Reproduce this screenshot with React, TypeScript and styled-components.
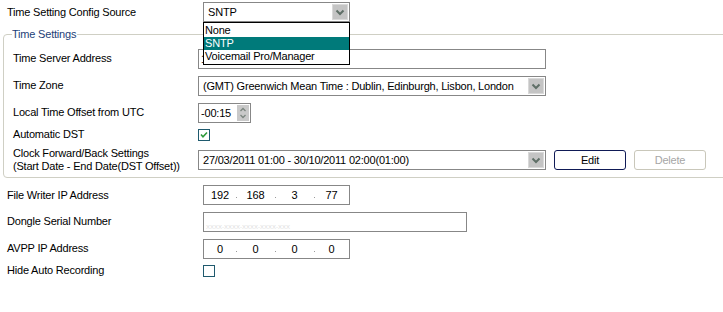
import React from "react";
import styled, {createGlobalStyle} from "styled-components";

const GlobalStyle = createGlobalStyle`
  html, body {
    margin: 0;
    padding: 0;
    background: #ffffff;
    overflow: hidden;
  }
  body {
    font-family: "Liberation Sans", Arial, sans-serif;
    font-size: 11px;
    letter-spacing: -0.2px;
    color: #000000;
  }
`;

const Page = styled.div`
  width: 723px;
  height: 312px;
  display: flex;
  flex-direction: column;
  overflow: hidden;
`;

const Row = styled.div<{ $h: number; $label: number; $pad: number; $top?: number }>`
  display: grid;
  grid-template-columns: ${p => p.$label}px 1fr;
  align-items: center;
  height: ${p => p.$h}px;
  margin-top: ${p => p.$top ?? 0}px;
  padding-left: ${p => p.$pad}px;
`;

const Label = styled.div`
  line-height: 13px;
  white-space: nowrap;
`;

const Controls = styled.div`
  display: flex;
  align-items: center;
  gap: 8px;
`;

const Box = styled.div<{ $w: number }>`
  position: relative;
  box-sizing: border-box;
  width: ${p => p.$w}px;
  height: 20px;
  border: 1px solid #878787;
  background: #ffffff;
  display: flex;
  align-items: center;
  padding-left: 2px;
  white-space: nowrap;
  overflow: visible;
`;

const BoxText = styled.span<{ $pad?: number }>`
  flex: 1;
  padding-left: ${p => p.$pad ?? 0}px;
  overflow: hidden;
`;

const ArrowBtn = styled.span`
  width: 16px;
  height: 16px;
  margin-right: 1px;
  display: flex;
`;

const DropList = styled.div`
  position: absolute;
  left: -1px;
  top: 19px;
  width: 147px;
  box-sizing: border-box;
  border: 1px solid #000000;
  background: #ffffff;
  z-index: 5;
  padding: 1px 0 1px;
`;

const DropItem = styled.div<{ $active?: boolean }>`
  height: 13px;
  line-height: 13px;
  padding-left: 1px;
  background: ${p => (p.$active ? "#007a7a" : "transparent")};
  color: ${p => (p.$active ? "#ffffff" : "#000000")};
`;

const Fieldset = styled.fieldset`
  margin: 4px -6px 0 3px;
  padding: 4px 0 1px 9px;
  border: 1px solid #cfcfc4;
  border-radius: 4px;
  min-width: 0;
`;

const Legend = styled.legend`
  color: #1d3f78;
  padding: 0 1px 0 0;
  margin-left: -1px;
  line-height: 13px;
`;

const Spin = styled.span`
  width: 12px;
  height: 16px;
  margin-right: 1px;
  display: flex;
`;

const Check = styled.span`
  box-sizing: border-box;
  width: 12px;
  height: 12px;
  border: 1px solid #1f5a6e;
  background: #ffffff;
  display: flex;
  align-items: center;
  justify-content: center;
`;

const Button = styled.button<{ $disabled?: boolean }>`
  box-sizing: border-box;
  width: 72px;
  height: 20px;
  border-radius: 3px;
  background: #ffffff;
  font: inherit;
  letter-spacing: inherit;
  border: 1px solid ${p => (p.$disabled ? "#c9c7ba" : "#0f1a56")};
  color: ${p => (p.$disabled ? "#a6a6a6" : "#000000")};
  padding: 0;
`;

const IpWrap = styled.div`
  box-sizing: border-box;
  width: 147px;
  height: 20px;
  border: 1px solid #878787;
  display: grid;
  grid-template-columns: 32px 39px 39px 35px;
  align-items: center;
`;

const IpSeg = styled.span<{ $dot: boolean }>`
  position: relative;
  text-align: center;
  &::after {
    content: "";
    display: ${p => (p.$dot ? "block" : "none")};
    position: absolute;
    right: -1px;
    top: 8px;
    width: 1px;
    height: 1px;
    background: #9a9a9a;
  }
`;

const Mask = styled.span`
  position: absolute;
  left: 2px;
  bottom: 1px;
  font-size: 6px;
  letter-spacing: 0;
  color: #dedede;
`;

const Arrow = () => (
  <ArrowBtn>
    <svg width="16" height="16" viewBox="0 0 16 16">
      <rect x="0" y="0" width="16" height="16" fill="#c4c4c4"/>
      <rect x="0.5" y="0.5" width="15" height="15" fill="none" stroke="#d9d9d9"/>
      <path d="M4.5 6.5 L8 10 L11.5 6.5" fill="none" stroke="#5f6f67" strokeWidth="2"/>
    </svg>
  </ArrowBtn>
);

const Select: React.FC<{ w: number; value: string; children?: React.ReactNode }> = ({w, value, children}) => (
  <Box $w={w}>
    <BoxText $pad={2}>{value}</BoxText>
    <Arrow/>
    {children}
  </Box>
);

const CheckBox: React.FC<{ checked?: boolean }> = ({checked}) => (
  <Check>
    {checked && (
      <svg width="8" height="8" viewBox="0 0 8 8">
        <path d="M1 3.5 L3 5.8 L7 1.5" fill="none" stroke="#2f9a3a" strokeWidth="1.6"/>
      </svg>
    )}
  </Check>
);

const IpBox: React.FC<{ parts: string[] }> = ({parts}) => (
  <IpWrap>
    {parts.map((p, i) => (
      <IpSeg key={`ip-${i}`} $dot={i < 3}>{p}</IpSeg>
    ))}
  </IpWrap>
);

const App: React.FC = () => {
  return (
    <Page>
      <GlobalStyle/>
      <Row $h={24} $label={196} $pad={7}>
        <Label>Time Setting Config Source</Label>
        <Controls>
          <Select w={147} value="SNTP">
            <DropList>
              <DropItem>None</DropItem>
              <DropItem $active>SNTP</DropItem>
              <DropItem>Voicemail Pro/Manager</DropItem>
            </DropList>
          </Select>
        </Controls>
      </Row>

      <Fieldset>
        <Legend>Time Settings</Legend>
        <Row $h={27} $label={185} $pad={0}>
          <Label>Time Server Address</Label>
          <Controls>
            <Box $w={348}><BoxText>1</BoxText></Box>
          </Controls>
        </Row>
        <Row $h={27} $label={185} $pad={0}>
          <Label>Time Zone</Label>
          <Controls>
            <Select w={348} value="(GMT) Greenwich Mean Time : Dublin, Edinburgh, Lisbon, London"/>
          </Controls>
        </Row>
        <Row $h={27} $label={185} $pad={0}>
          <Label>Local Time Offset from UTC</Label>
          <Controls>
            <Box $w={53}>
              <BoxText>-00:15</BoxText>
              <Spin>
                <svg width="12" height="16" viewBox="0 0 12 16">
                  <rect x="0" y="0" width="12" height="16" fill="#c9c9c9"/>
                  <path d="M3.5 6 L6 3.5 L8.5 6" fill="none" stroke="#7b857f" strokeWidth="1.3"/>
                  <path d="M3.5 10 L6 12.5 L8.5 10" fill="none" stroke="#7b857f" strokeWidth="1.3"/>
                </svg>
              </Spin>
            </Box>
          </Controls>
        </Row>
        <Row $h={17} $label={185} $pad={0}>
          <Label>Automatic DST</Label>
          <Controls>
            <CheckBox checked/>
          </Controls>
        </Row>
        <Row $h={33} $label={185} $pad={0}>
          <Label>
            Clock Forward/Back Settings<br/>
            (Start Date - End Date(DST Offset))
          </Label>
          <Controls>
            <Select w={348} value="27/03/2011 01:00 - 30/10/2011 02:00(01:00)"/>
            <Button>Edit</Button>
            <Button $disabled>Delete</Button>
          </Controls>
        </Row>
      </Fieldset>

      <Row $h={26} $top={4} $label={196} $pad={7}>
        <Label>File Writer IP Address</Label>
        <Controls>
          <IpBox parts={["192", "168", "3", "77"]}/>
        </Controls>
      </Row>
      <Row $h={27} $label={196} $pad={7}>
        <Label>Dongle Serial Number</Label>
        <Controls>
          <Box $w={264}>
            <Mask>XXXX-XXXX-XXXX-XXXX-XXX</Mask>
          </Box>
        </Controls>
      </Row>
      <Row $h={27} $label={196} $pad={7}>
        <Label>AVPP IP Address</Label>
        <Controls>
          <IpBox parts={["0", "0", "0", "0"]}/>
        </Controls>
      </Row>
      <Row $h={17} $label={196} $pad={7}>
        <Label>Hide Auto Recording</Label>
        <Controls>
          <CheckBox/>
        </Controls>
      </Row>
    </Page>
  );
};

export default App;
